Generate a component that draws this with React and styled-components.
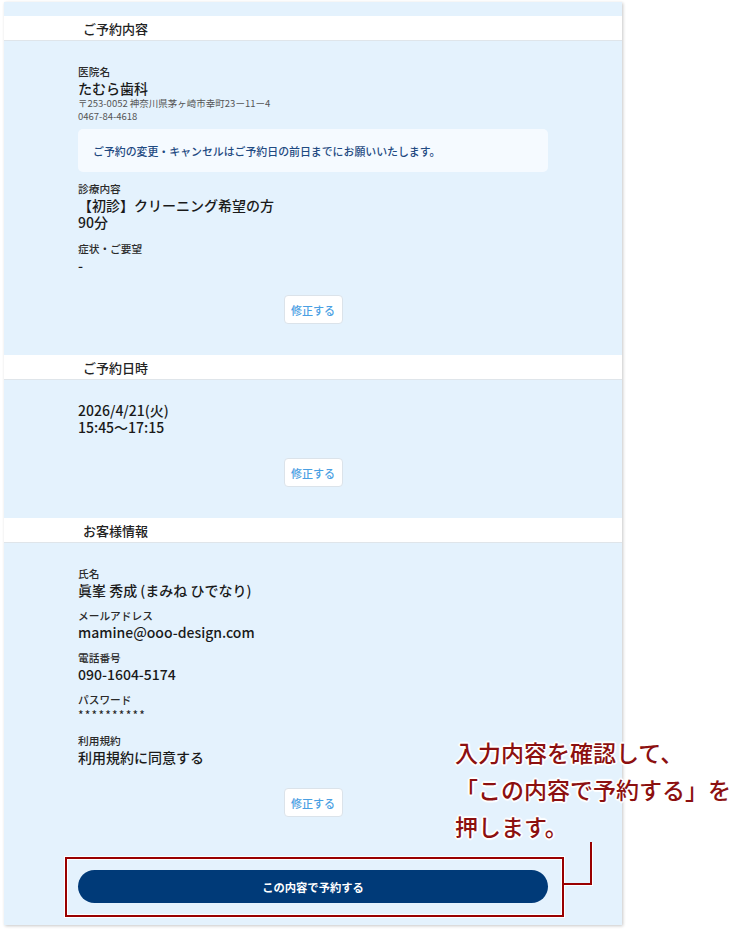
import React from 'react';
import styled, { createGlobalStyle } from 'styled-components';

const GlobalStyle = createGlobalStyle`
  html, body {
    margin: 0;
    padding: 0;
    background: #ffffff;
  }
  body {
    font-family: "Noto Sans CJK JP", "Noto Sans", sans-serif;
    color: #222;
  }
`;

const Page = styled.div`
  position: relative;
  width: 733px;
  height: 930px;
  padding: 2px 0 0 4px;
  box-sizing: border-box;
  overflow: hidden;
`;

const Panel = styled.div`
  width: 618px;
  background: #e4f2fd;
  padding: 14px 0 22px;
  box-shadow: 1px 1px 3px rgba(0, 0, 0, 0.22);
`;

const SectionHead = styled.div`
  background: #fff;
  height: 25px;
  border-bottom: 1px solid #dfe5ea;
  box-sizing: border-box;
`;

const HeadText = styled.h2`
  width: 470px;
  margin: 0 auto;
  padding-left: 5px;
  box-sizing: border-box;
  font-size: 13px;
  font-weight: 500;
  line-height: 25px;
  color: #222;
`;

const SectionBody = styled.div`
  width: 470px;
  margin: 0 auto;
  padding: ${(p) => p.$top || 23}px 0 ${(p) => p.$bottom ?? 31}px;
  display: flex;
  flex-direction: column;
`;

const Field = styled.div`
  margin-top: ${(p) => p.$gap || 0}px;
  display: flex;
  flex-direction: column;
`;

const Label = styled.div`
  font-size: 10.7px;
  line-height: 16px;
  font-weight: 500;
  color: #2a2a2a;
`;

const Value = styled.div`
  font-size: 14px;
  line-height: 17px;
  font-weight: 500;
  color: #1a1a1a;
`;

const Stars = styled.div`
  font-size: 12px;
  line-height: 13px;
  letter-spacing: 1.2px;
  color: #222;
  padding-bottom: 3px;
`;

const Sub = styled.div`
  font-size: 9.5px;
  line-height: 13px;
  color: #555;
`;

const Notice = styled.div`
  margin-top: 6px;
  height: 43px;
  display: flex;
  align-items: center;
  padding-left: 15px;
  background: #f5faff;
  border-radius: 5px;
  font-size: 10.9px;
  font-weight: 500;
  color: #1f4a82;
`;

const EditButton = styled.button`
  align-self: center;
  margin-top: ${(p) => p.$gap || 22}px;
  width: 59px;
  height: 29px;
  padding: 0;
  background: #fff;
  border: 1px solid #dbe3ea;
  border-radius: 4px;
  font-family: inherit;
  font-size: 11px;
  font-weight: 500;
  color: #4aa0e3;
`;

const SubmitButton = styled.button`
  display: block;
  width: 470px;
  height: 33px;
  margin: 53px auto 0;
  border: none;
  border-radius: 17px;
  background: #003a78;
  color: #fff;
  font-family: inherit;
  font-size: 11.3px;
  font-weight: 700;
`;

const Callout = styled.div`
  position: absolute;
  left: 455px;
  top: 734px;
  font-size: 23px;
  line-height: 37px;
  font-weight: 500;
  white-space: nowrap;
  color: #8c1010;
  text-shadow: 1px 0 0 #fff, -1px 0 0 #fff, 0 1px 0 #fff, 0 -1px 0 #fff,
    1px 1px 0 #fff, -1px -1px 0 #fff, 1px -1px 0 #fff, -1px 1px 0 #fff,
    2px 0 1px #fff, -2px 0 1px #fff, 0 2px 1px #fff, 0 -2px 1px #fff;
`;

const Frame = styled.div`
  position: absolute;
  left: 65px;
  top: 857px;
  width: 499px;
  height: 60px;
  box-sizing: border-box;
  border: 2px solid #990000;
  box-shadow: 0 0 0 1px rgba(255, 255, 255, 0.9), inset 0 0 0 1px rgba(255, 255, 255, 0.9);
`;

const Leader = styled.div`
  position: absolute;
  left: 563px;
  top: 842px;
  width: 29px;
  height: 43px;
  box-sizing: border-box;
  border-right: 2px solid #990000;
  border-bottom: 2px solid #990000;
  box-shadow: 1px 1px 0 rgba(255, 255, 255, 0.9);
`;

export default function App() {
  return (
    <>
      <GlobalStyle />
      <Page>
        <Panel>
          <SectionHead>
            <HeadText>ご予約内容</HeadText>
          </SectionHead>
          <SectionBody>
            <Field>
              <Label>医院名</Label>
              <Value>たむら歯科</Value>
              <Sub>〒253-0052 神奈川県茅ヶ崎市幸町23ー11ー4</Sub>
              <Sub>0467-84-4618</Sub>
            </Field>
            <Notice>ご予約の変更・キャンセルはご予約日の前日までにお願いいたします。</Notice>
            <Field $gap={9}>
              <Label>診療内容</Label>
              <Value>【初診】クリーニング希望の方</Value>
              <Value>90分</Value>
            </Field>
            <Field $gap={10}>
              <Label>症状・ご要望</Label>
              <Value>-</Value>
            </Field>
            <EditButton $gap={21}>修正する</EditButton>
          </SectionBody>

          <SectionHead>
            <HeadText>ご予約日時</HeadText>
          </SectionHead>
          <SectionBody $top={22}>
            <Field>
              <Value>2026/4/21(火)</Value>
              <Value>15:45～17:15</Value>
            </Field>
            <EditButton>修正する</EditButton>
          </SectionBody>

          <SectionHead>
            <HeadText>お客様情報</HeadText>
          </SectionHead>
          <SectionBody $bottom={0}>
            <Field>
              <Label>氏名</Label>
              <Value>眞峯 秀成 (まみね ひでなり)</Value>
            </Field>
            <Field $gap={9}>
              <Label>メールアドレス</Label>
              <Value>mamine@ooo-design.com</Value>
            </Field>
            <Field $gap={9}>
              <Label>電話番号</Label>
              <Value>090-1604-5174</Value>
            </Field>
            <Field $gap={9}>
              <Label>パスワード</Label>
              <Stars>**********</Stars>
            </Field>
            <Field $gap={9}>
              <Label>利用規約</Label>
              <Value>利用規約に同意する</Value>
            </Field>
            <EditButton>修正する</EditButton>
          </SectionBody>

          <SubmitButton>この内容で予約する</SubmitButton>
        </Panel>

        <Frame />
        <Leader />
        <Callout>
          入力内容を確認して、
          <br />
          「この内容で予約する」を
          <br />
          押します。
        </Callout>
      </Page>
    </>
  );
}
